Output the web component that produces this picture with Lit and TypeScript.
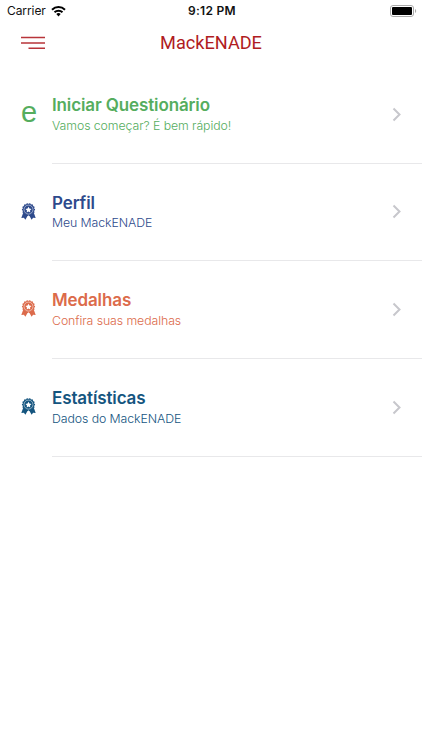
import { LitElement, html, css, svg } from "lit";
import { customElement } from "lit/decorators.js";
import { classMap } from "lit/directives/class-map.js";

interface Item { tone: string; title: string; detail: string; letter?: boolean }

const items: Item[] = [
  { tone: "green", title: "Iniciar Questionário", detail: "Vamos começar? É bem rápido!", letter: true },
  { tone: "blue", title: "Perfil", detail: "Meu MackENADE" },
  { tone: "orange", title: "Medalhas", detail: "Confira suas medalhas" },
  { tone: "teal", title: "Estatísticas", detail: "Dados do MackENADE" },
];

const scallops = Array.from({ length: 14 }, (_, i) => {
  const a = (i * Math.PI) / 7;
  return svg`<circle cx=${7.5 + 5.7 * Math.cos(a)} cy=${6.6 + 5.7 * Math.sin(a)} r=".9" fill="currentColor"/>`;
});

const medal = html`<svg width="15" height="17" viewBox="0 0 15 17">
  <path fill="currentColor" d="M2.2 9.8.3 14.9l2.6-.2 1.5 2.1 2.5-4.5zM12.8 9.8l1.9 5.1-2.6-.2-1.5 2.1-2.5-4.5z"/>
  ${scallops}
  <circle cx="7.5" cy="6.6" r="5.9" fill="currentColor"/>
  <circle cx="7.5" cy="6.6" r="4.5" fill="none" stroke="#fff" stroke-opacity=".85" stroke-width=".6"/>
  <path fill="#fff" d="m7.5 3.7.9 1.9 2.1.3L9 7.4l.3 2.1-1.8-1-1.8 1L6 7.4 4.5 5.9l2.1-.3z"/>
</svg>`;

@customElement("app-root")
export class AppRoot extends LitElement {
  static styles = css`
    :host { display: block; height: 750px; background: #fff; overflow: hidden; font-family: Inter, "Liberation Sans", sans-serif; }
    svg { display: block; }
    .status { display: grid; grid-template-columns: 1fr auto 1fr; height: 22px; align-items: center; padding: 0 5px 0 7px; font-size: 12px; line-height: 22px; color: #111; }
    .carrier { display: flex; align-items: center; gap: 5px; letter-spacing: -.08px; }
    .time { font-weight: 600; letter-spacing: .3px; }
    .battery { justify-self: end; }
    .nav { display: grid; grid-template-columns: 60px 1fr 60px; height: 44px; align-items: start; }
    .menu { margin: 14px 0 0 21px; }
    .name { margin: 0; text-align: center; font: 400 19px/42px Roboto, sans-serif; color: #b01c22; transform: scaleX(.955); }
    .row { display: grid; grid-template-columns: 52px 1fr; height: 97.7px; }
    .icon { display: flex; justify-content: center; padding: 39px 0 0 5px; }
    .letter { font: 400 29px/33px "Liberation Sans", sans-serif; margin: -9px 0 0 1px; }
    .body { display: flex; justify-content: space-between; border-bottom: 1px solid #e8e8ea; padding-right: 20px; }
    .texts { padding-top: 28px; white-space: nowrap; }
    .title { font-size: 17px; line-height: 23px; font-weight: 600; letter-spacing: -.12px; }
    .detail { margin-top: -.4px; font-size: 12.3px; line-height: 18px; font-weight: 300; letter-spacing: -.07px; }
    .chevron { margin-top: 40.6px; }
    .green { color: #55ad5e; }
    .blue { color: #2e4a8c; }
    .orange { color: #dc6b4b; }
    .teal { color: #15557f; }
  `;

  render() {
    return html`
      <header class="status">
        <div class="carrier"><span>Carrier</span>
          <svg width="15" height="11" viewBox="0 0 15 11" fill="none" stroke="#000" stroke-width="2">
            <path d="M1 3.7a9.4 9.4 0 0 1 13 0M3.5 6.3a5.8 5.8 0 0 1 8 0"/>
            <path d="M5.3 8.1a3.2 3.2 0 0 1 4.4 0L7.5 10.4z" fill="#000" stroke="none"/>
          </svg>
        </div>
        <span class="time">9:12 PM</span>
        <svg class="battery" width="27" height="12" viewBox="0 0 27 12">
          <rect x=".5" y=".5" width="23" height="11" rx="2.5" fill="#fff" stroke="#aaa"/>
          <rect x="2" y="2" width="20" height="8" rx="1" fill="#000"/>
          <path d="M25 4v4c1.6-.7 1.6-3.3 0-4z" fill="#aaa"/>
        </svg>
      </header>
      <nav class="nav">
        <svg class="menu" width="25" height="14" viewBox="0 0 25 14" stroke="#b8343a" stroke-width="1.6">
          <path d="M0 1.5h24M0 7h24M7.5 12.2H24"/>
        </svg>
        <h1 class="name">MackENADE</h1>
      </nav>
      <main>
        ${items.map((item) => html`
          <section class=${classMap({ row: true, [item.tone]: true })}>
            <div class="icon">${item.letter ? html`<span class="letter">e</span>` : medal}</div>
            <div class="body">
              <div class="texts">
                <div><span class="title">${item.title}</span></div>
                <div class="detail">${item.detail}</div>
              </div>
              <svg class="chevron" width="10" height="15" viewBox="0 0 10 15" fill="none" stroke="#c7c7cc" stroke-width="2">
                <path d="m1.5 1.5 6 6-6 6"/>
              </svg>
            </div>
          </section>`)}
      </main>`;
  }
}
